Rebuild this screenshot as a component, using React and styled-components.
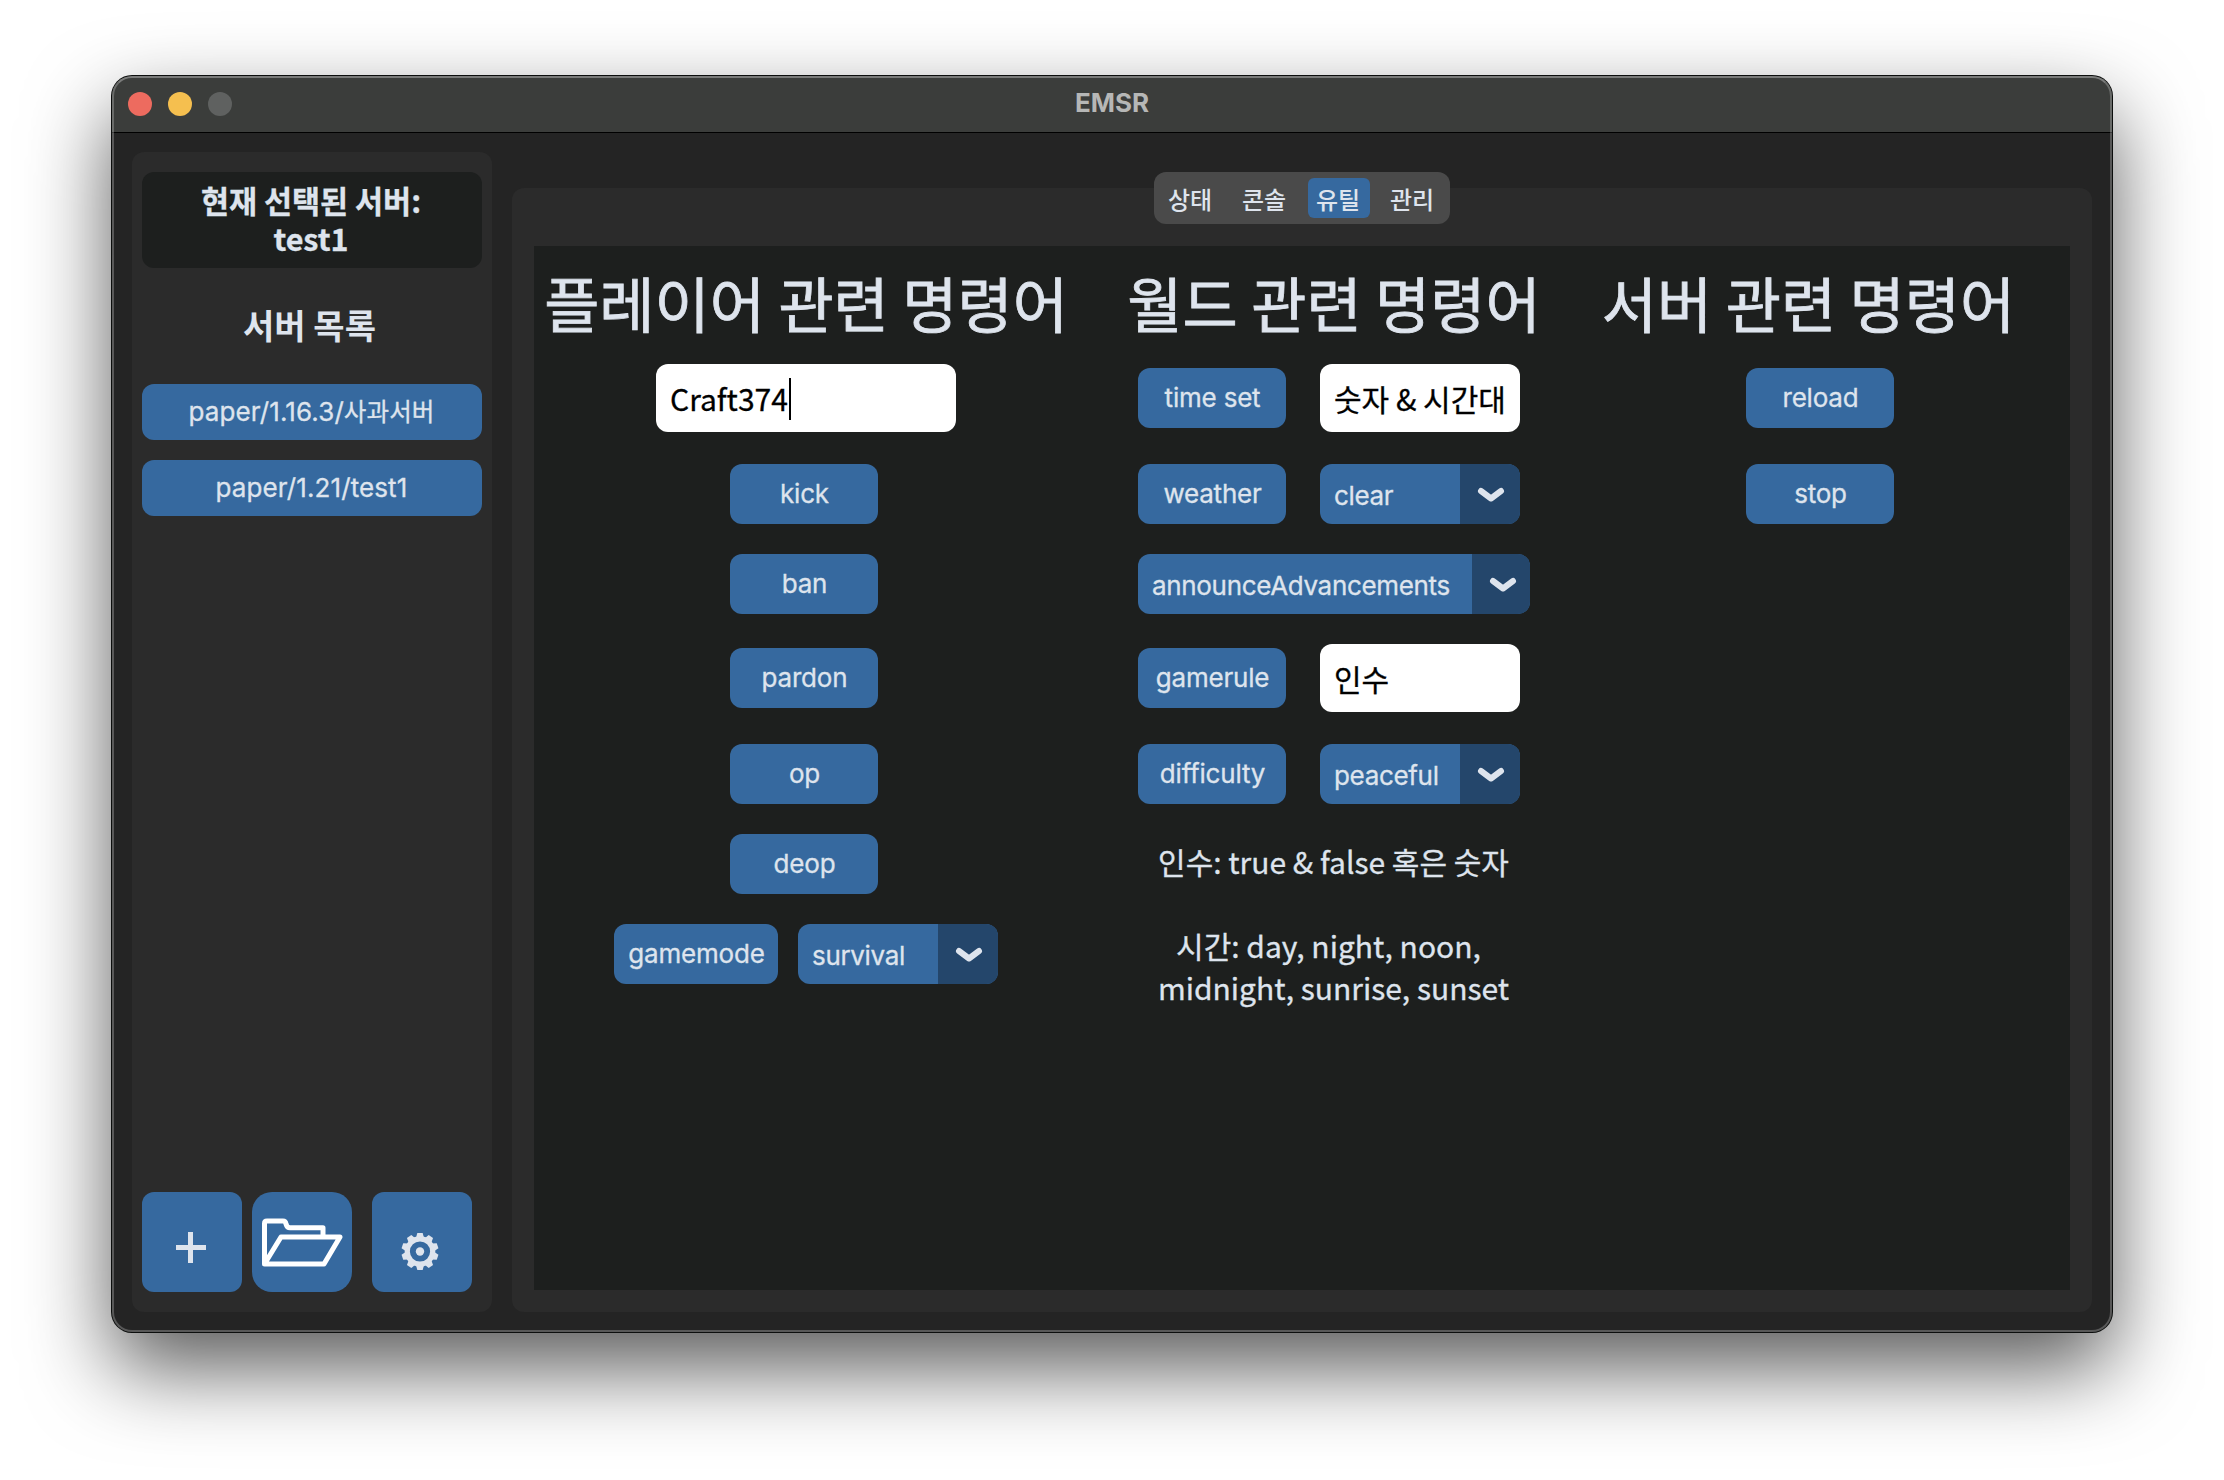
import React from "react";
import styled, { createGlobalStyle } from "styled-components";

const blue = "#36699f";
const blueDark = "#24466b";
const ink = "#dee4ed";

const Global = createGlobalStyle`
  * { box-sizing: border-box; }
  body { margin: 0; background: #fff; }
  button, input { font: inherit; border: 0; margin: 0; padding: 0; }
`;

const kr = `"Noto Sans CJK KR", sans-serif`;
const ui = `Inter, "Noto Sans CJK KR", sans-serif`;

const Desktop = styled.div`
  width: 2224px;
  height: 1480px;
  padding: 76px 112px 148px;
  overflow: hidden;
  background: #fff;
  color: ${ink};
`;

const Window = styled.div`
  position: relative;
  height: 1256px;
  display: flex;
  flex-direction: column;
  border-radius: 20px;
  background: #242424;
  box-shadow: 0 0 0 1px #0c0e0d, 0 36px 84px rgba(0, 0, 0, 0.65);
  &::after {
    content: "";
    position: absolute;
    inset: 0;
    border-radius: 20px;
    border: 2px solid rgba(255, 255, 255, 0.24);
    border-top-color: rgba(255, 255, 255, 0.32);
    pointer-events: none;
  }
`;

const TitleBar = styled.header`
  height: 57px;
  flex: none;
  display: grid;
  grid-template-columns: 1fr auto 1fr;
  align-items: center;
  padding: 0 16px;
  border-radius: 20px 20px 0 0;
  border-bottom: 1px solid #000;
  background: #3b3d3b;
`;

const Lights = styled.div`
  display: flex;
  gap: 16px;
`;

const Light = styled.span`
  width: 24px;
  height: 24px;
  border-radius: 50%;
  background: ${(p) => p.$color};
`;

const Title = styled.div`
  padding-bottom: 2px;
  font: 700 26px/30px ${ui};
  color: #b6b7b6;
`;

const Body = styled.div`
  flex: 1;
  display: flex;
  align-items: flex-start;
  gap: 20px;
  padding: 19px 20px 20px;
`;

const Sidebar = styled.aside`
  width: 360px;
  height: 1160px;
  display: flex;
  flex-direction: column;
  padding: 20px 10px;
  border-radius: 12px;
  background: #2b2b2b;
`;

const Current = styled.div`
  height: 96px;
  padding: 9px 2px 0 0;
  border-radius: 12px;
  background: #1d1f1e;
  text-align: center;
  font: 700 30.5px/38px ${kr};
  -webkit-text-stroke: 0.3px ${ink};
  white-space: pre-line;
`;

const ListTitle = styled.h2`
  margin: 0;
  padding-right: 5px;
  height: 116px;
  font: 700 34px/114px ${kr};
  text-align: center;
`;

const ServerList = styled.div`
  flex: 1;
  display: flex;
  flex-direction: column;
  gap: 20px;
`;

const ServerButton = styled.button`
  height: 56px;
  padding-right: 1px;
  border-radius: 12px;
  background: ${blue};
  color: ${ink};
  font: 400 26px/56px ${ui};
  letter-spacing: 0.1px;
  -webkit-text-stroke: 0.3px ${ink};
`;

const Hangul = styled.span`
  font-size: 24.5px;
`;

const Tools = styled.div`
  display: flex;
`;

const Tool = styled.button`
  width: 100px;
  height: 100px;
  margin-right: ${(p) => p.$after || 0}px;
  border-radius: ${(p) => p.$radius || 12}px;
  background: ${blue};
  color: ${ink};
  svg { display: block; }
`;

const Main = styled.main`
  width: 1580px;
  padding-top: 36px;
`;

const Frame = styled.div`
  height: 1124px;
  display: flex;
  flex-direction: column;
  align-items: center;
  border-radius: 12px;
  background: #2b2b2b;
`;

const Tabs = styled.nav`
  width: 296px;
  height: 52px;
  flex: none;
  display: flex;
  gap: 12px;
  margin-top: -16px;
  margin-bottom: 22px;
  padding: 6px;
  border-radius: 12px;
  background: #4a4a4a;
`;

const Tab = styled.button`
  width: 62px;
  height: 40px;
  flex: none;
  padding: 1px 2px 0 0;
  border-radius: 6px;
  background: ${(p) => (p.$active ? blue : "transparent")};
  color: ${ink};
  font: 500 24px/39px ${kr};
`;

const Panel = styled.div`
  width: 1536px;
  height: 1044px;
  display: flex;
  background: #1d1f1e;
`;

const Column = styled.section`
  width: ${(p) => p.$width}px;
  display: flex;
  flex-direction: column;
  align-items: center;
`;

const Heading = styled.h1`
  margin: 0;
  padding-right: ${(p) => p.$shift}px;
  height: 118px;
  font: 400 60px/111px ${kr};
  -webkit-text-stroke: 0.8px ${ink};
  white-space: nowrap;
`;

const Row = styled.div`
  width: ${(p) => p.$width || "auto"};
  height: ${(p) => (p.$tall ? 68 : 60)}px;
  margin-bottom: ${(p) => (p.$tall ? 32 : 30)}px;
  margin-right: ${(p) => p.$shift || 0}px;
  display: flex;
  align-items: center;
  gap: ${(p) => p.$gap || 20}px;
`;

const Button = styled.button`
  width: ${(p) => p.$width || 148}px;
  height: 60px;
  padding-left: 1px;
  border-radius: 12px;
  background: ${blue};
  color: ${ink};
  font: 400 26px/60px ${ui};
  letter-spacing: -0.2px;
  -webkit-text-stroke: 0.3px ${ink};
`;

const Field = styled.div`
  width: ${(p) => p.$width}px;
  height: 68px;
  display: flex;
  align-items: center;
  padding: 2px 14px 0;
  border-radius: 12px;
  background: #fff;
  color: #000;
  font: 400 30px/60px ${kr};
  -webkit-text-stroke: 0.3px #000;
  white-space: nowrap;
`;

const FieldText = styled.span`
  padding-bottom: 2px;
`;

const Caret = styled.span`
  width: 2px;
  height: 42px;
  margin-left: 1px;
  background: #000;
`;

const Select = styled.div`
  width: ${(p) => p.$width || 200}px;
  height: 60px;
  display: flex;
  border-radius: 12px;
  overflow: hidden;
  background: ${blue};
  font: 400 26px/64px ${ui};
  letter-spacing: -0.33px;
  -webkit-text-stroke: 0.3px ${ink};
`;

const Value = styled.span`
  flex: 1;
  padding-left: 14px;
`;

const Arrow = styled.span`
  width: ${(p) => p.$width}px;
  background: ${blueDark};
  svg { display: block; }
`;

const Hints = styled.div`
  padding: 6px 1px 0 0;
`;

const Hint = styled.p`
  margin: 0 0 ${(p) => p.$after || 0}px;
  height: ${(p) => p.$height}px;
  overflow: hidden;
  text-align: center;
  font: 400 30px/42px ${kr};
  -webkit-text-stroke: 0.3px ${ink};
`;

const HintLine = styled.span`
  display: block;
  padding-right: ${(p) => p.$shift || 0}px;
  white-space: nowrap;
`;

function Dropdown({ value, width, arrow = 60 }) {
  return (
    <Select $width={width}>
      <Value>{value}</Value>
      <Arrow $width={arrow}>
        <svg width="58" height="60" viewBox="0 0 58 60">
          <path d="M21 27 L31 34.5 L41 27" fill="none" stroke={ink} strokeWidth="6" strokeLinecap="round" strokeLinejoin="round" />
        </svg>
      </Arrow>
    </Select>
  );
}

function Plus() {
  return (
    <svg width="100" height="100" viewBox="0 0 100 100">
      <path d="M34 55.5H64M48.5 40V71" fill="none" stroke={ink} strokeWidth="5" />
    </svg>
  );
}

function Folder() {
  return (
    <svg width="100" height="100" viewBox="0 0 100 100">
      <path
        d="M12.5 72V31.5Q12.5 29 15 29H31Q33.5 29 34 32Q35 35.7 38 35.7H71V45M12.5 72L29 45H88L72 72Z"
        fill="none"
        stroke="#fff"
        strokeWidth="5"
        strokeLinejoin="round"
      />
    </svg>
  );
}

function Gear() {
  const teeth = Array.from({ length: 10 }, (_, i) => i * 36);
  return (
    <svg width="100" height="100" viewBox="0 0 100 100">
      <g transform="translate(48 59.5)">
        <circle r="12.7" fill="none" stroke={ink} strokeWidth="5.2" />
        <circle r="4.2" fill={ink} />
        {teeth.map((a) => (
          <path key={a} transform={`rotate(${a})`} d="M-4 -13.5L-2.7 -18.5H2.7L4 -13.5Z" fill={ink} />
        ))}
      </g>
    </svg>
  );
}

export default function App() {
  return (
    <Desktop>
      <Global />
      <Window>
        <TitleBar>
          <Lights>
            <Light $color="#ed6b5f" />
            <Light $color="#f5bf4f" />
            <Light $color="#5f6160" />
          </Lights>
          <Title>EMSR</Title>
          <span />
        </TitleBar>
        <Body>
          <Sidebar>
            <Current>{"현재 선택된 서버:\ntest1"}</Current>
            <ListTitle>서버 목록</ListTitle>
            <ServerList>
              <ServerButton>
                paper/1.16.3/<Hangul>사과서버</Hangul>
              </ServerButton>
              <ServerButton>paper/1.21/test1</ServerButton>
            </ServerList>
            <Tools>
              <Tool $after={10}><Plus /></Tool>
              <Tool $after={20} $radius={20}><Folder /></Tool>
              <Tool><Gear /></Tool>
            </Tools>
          </Sidebar>
          <Main>
            <Frame>
              <Tabs>
                <Tab>상태</Tab>
                <Tab>콘솔</Tab>
                <Tab $active>유틸</Tab>
                <Tab>관리</Tab>
              </Tabs>
              <Panel>
                <Column $width={544}>
                  <Heading $shift={0}>플레이어 관련 명령어</Heading>
                  <Row $tall>
                    <Field $width={300}>
                      <FieldText>Craft374</FieldText>
                      <Caret />
                    </Field>
                  </Row>
                  {["kick", "ban"].map((t) => (
                    <Row key={t} $shift={4}><Button>{t}</Button></Row>
                  ))}
                  <Row $tall $shift={4}><Button>pardon</Button></Row>
                  {["op", "deop"].map((t) => (
                    <Row key={t} $shift={4}><Button>{t}</Button></Row>
                  ))}
                  <Row>
                    <Button $width={164}>gamemode</Button>
                    <Dropdown value="survival" />
                  </Row>
                </Column>
                <Column $width={512}>
                  <Heading $shift={0}>월드 관련 명령어</Heading>
                  <Row $tall $gap={34} $width="392px">
                    <Button>time set</Button>
                    <Field $width={200}><FieldText>숫자 &amp; 시간대</FieldText></Field>
                  </Row>
                  <Row $gap={34} $width="392px">
                    <Button>weather</Button>
                    <Dropdown value="clear" />
                  </Row>
                  <Row>
                    <Dropdown value="announceAdvancements" width={392} arrow={58} />
                  </Row>
                  <Row $tall $gap={34} $width="392px">
                    <Button>gamerule</Button>
                    <Field $width={200}><FieldText>인수</FieldText></Field>
                  </Row>
                  <Row $gap={34} $width="392px">
                    <Button>difficulty</Button>
                    <Dropdown value="peaceful" />
                  </Row>
                  <Hints>
                    <Hint $height={60} $after={24}>
                      <HintLine>인수: true &amp; false 혹은 숫자</HintLine>
                    </Hint>
                    <Hint $height={84}>
                      <HintLine $shift={10}>시간: day, night, noon,</HintLine>
                      <HintLine>midnight, sunrise, sunset</HintLine>
                    </Hint>
                  </Hints>
                </Column>
                <Column $width={460}>
                  <Heading $shift={23}>서버 관련 명령어</Heading>
                  <Row $tall><Button>reload</Button></Row>
                  <Row><Button>stop</Button></Row>
                </Column>
              </Panel>
            </Frame>
          </Main>
        </Body>
      </Window>
    </Desktop>
  );
}
